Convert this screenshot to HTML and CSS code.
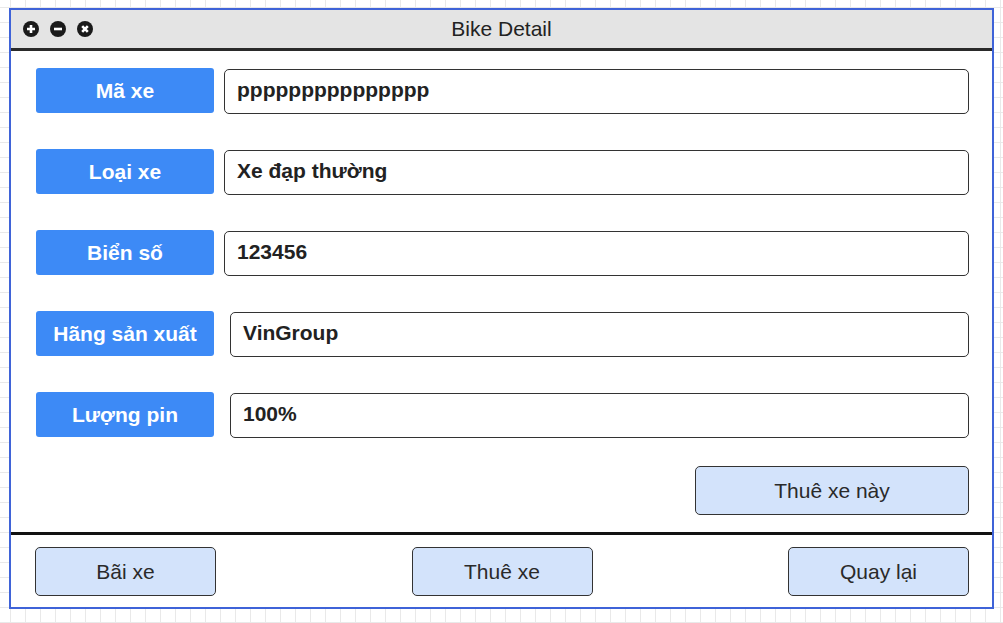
FILE: index.html
```html
<!DOCTYPE html>
<html lang="vi">
<head>
<meta charset="utf-8">
<title>Bike Detail</title>
<link rel="stylesheet" href="styles.css">
</head>
<body>
<div class="window">
  <div class="titlebar">
    <div class="controls">
      <svg class="ctl" viewBox="0 0 16 16" width="16" height="16"><circle cx="8" cy="8" r="8" fill="#1a1a1a"/><path d="M8 4v8M4 8h8" stroke="#fff" stroke-width="2.6"/></svg>
      <svg class="ctl" viewBox="0 0 16 16" width="16" height="16"><circle cx="8" cy="8" r="8" fill="#1a1a1a"/><path d="M4 8h8" stroke="#fff" stroke-width="2.6"/></svg>
      <svg class="ctl" viewBox="0 0 16 16" width="16" height="16"><circle cx="8" cy="8" r="8" fill="#1a1a1a"/><path d="M5.2 5.2l5.6 5.6M10.8 5.2l-5.6 5.6" stroke="#fff" stroke-width="2.6"/></svg>
    </div>
    <div class="title">Bike Detail</div>
  </div>
  <div class="content">
    <div class="row">
      <div class="label">Mã xe</div>
      <div class="field">ppppppppppppppp</div>
    </div>
    <div class="row">
      <div class="label">Loại xe</div>
      <div class="field">Xe đạp thường</div>
    </div>
    <div class="row">
      <div class="label">Biển số</div>
      <div class="field">123456</div>
    </div>
    <div class="row wide">
      <div class="label">Hãng sản xuất</div>
      <div class="field">VinGroup</div>
    </div>
    <div class="row wide">
      <div class="label">Lượng pin</div>
      <div class="field">100%</div>
    </div>
    <div class="actions">
      <div class="btn btn-rent">Thuê xe này</div>
    </div>
  </div>
  <div class="footer">
    <div class="btn">Bãi xe</div>
    <div class="btn">Thuê xe</div>
    <div class="btn">Quay lại</div>
  </div>
</div>
</body>
</html>
```
FILE: styles.css
```css
html, body {
  margin: 0;
  padding: 0;
}
body {
  width: 1003px;
  height: 623px;
  overflow: hidden;
  font-family: "Liberation Sans", Arial, sans-serif;
  background-color: #ffffff;
  background-image:
    linear-gradient(to right, #e9e9e9 1px, transparent 1px),
    linear-gradient(to bottom, #e9e9e9 1px, transparent 1px);
  background-size: 15px 15px;
  background-position: 10px 7px;
}
.window {
  box-sizing: border-box;
  margin: 8px 0 0 9px;
  width: 985px;
  height: 601px;
  border: 2px solid #3f63d8;
  background: #fff;
  display: flex;
  flex-direction: column;
}
.titlebar {
  position: relative;
  flex: 0 0 auto;
  height: 38px;
  background: #e4e4e4;
  border-bottom: 3px solid #2a2a2a;
  display: flex;
  align-items: center;
  justify-content: center;
}
.controls {
  position: absolute;
  left: 12px;
  top: 11px;
  display: flex;
  gap: 11px;
}
.ctl {
  display: block;
}
.title {
  font-size: 21px;
  color: #222;
}
.content {
  flex: 0 0 auto;
  box-sizing: border-box;
  height: 484px;
  padding: 17px 23px 0 25px;
  display: flex;
  flex-direction: column;
  gap: 35px;
  border-bottom: 3px solid #111;
}
.row {
  display: flex;
  align-items: flex-start;
  gap: 10px;
}
.row.wide {
  gap: 16px;
}
.label {
  flex: 0 0 178px;
  height: 45px;
  background: #3d8af6;
  border-radius: 3px;
  color: #fff;
  font-weight: bold;
  font-size: 21px;
  display: flex;
  align-items: center;
  justify-content: center;
  white-space: nowrap;
}
.field {
  box-sizing: border-box;
  flex: 1;
  height: 45px;
  margin-top: 1px;
  border: 1.5px solid #333;
  border-radius: 5px;
  background: #fff;
  color: #222;
  font-weight: bold;
  font-size: 21px;
  padding: 0 0 4px 12px;
  display: flex;
  align-items: center;
}
.actions {
  display: flex;
  justify-content: flex-end;
  margin-top: -7px;
}
.btn {
  box-sizing: border-box;
  width: 181px;
  height: 49px;
  background: #d3e3fb;
  border: 1.5px solid #333;
  border-radius: 5px;
  color: #2a2a2a;
  font-size: 21px;
  display: flex;
  align-items: center;
  justify-content: center;
}
.btn-rent {
  width: 274px;
}
.footer {
  flex: 1 1 auto;
  padding: 12px 23px 0 24px;
  display: flex;
  justify-content: space-between;
  align-items: flex-start;
}
```
